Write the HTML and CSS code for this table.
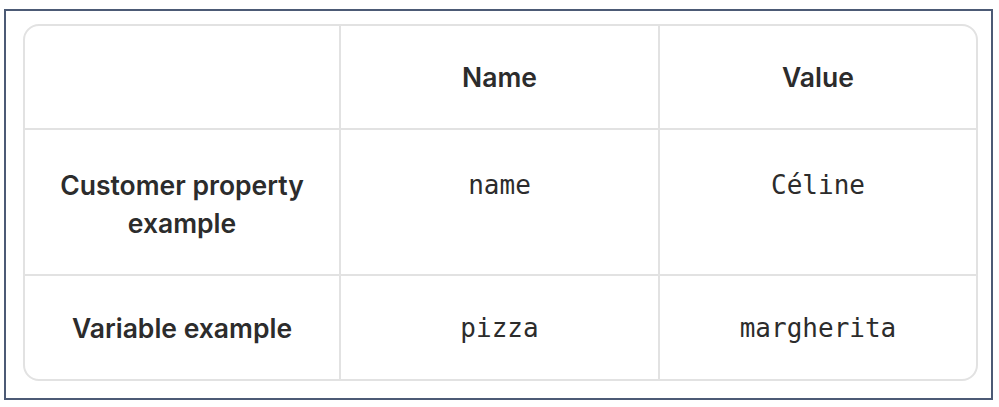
FILE: index.html
```html
<!DOCTYPE html>
<html>
<head>
<meta charset="utf-8">
<link rel="stylesheet" href="styles.css">
</head>
<body>
<div class="frame">
  <div class="card">
    <div class="cell head"></div>
    <div class="cell head">Name</div>
    <div class="cell head last">Value</div>

    <div class="cell label top">Customer property example</div>
    <div class="cell code top">name</div>
    <div class="cell code top last">Céline</div>

    <div class="cell label bottom">Variable example</div>
    <div class="cell code bottom">pizza</div>
    <div class="cell code bottom last">margherita</div>
  </div>
</div>
</body>
</html>
```
FILE: styles.css
```css
html, body {
  margin: 0;
  padding: 0;
  background: #ffffff;
}
.frame {
  box-sizing: border-box;
  margin: 9px 0 0 4px;
  width: 989px;
  height: 391px;
  border: 2px solid #4c5a75;
  padding: 13px 13px 0 17px;
}
.card {
  box-sizing: border-box;
  width: 955px;
  height: 357px;
  border: 2px solid #e2e2e2;
  border-radius: 16px;
  overflow: hidden;
  display: grid;
  grid-template-columns: 316px 319px 1fr;
  grid-template-rows: 104px 146px 1fr;
}
.cell {
  border-right: 2px solid #e2e2e2;
  border-bottom: 2px solid #e2e2e2;
  display: flex;
  justify-content: center;
  text-align: center;
  color: #2c2c2c;
  font-family: Inter, "Noto Sans", sans-serif;
  font-weight: 600;
  font-size: 26.5px;
  line-height: 38px;
}
.cell.last { border-right: none; }
.cell.bottom { border-bottom: none; }
.head { align-items: center; }
.top { align-items: flex-start; padding-top: 36px; }
.bottom { align-items: center; }
.label { padding-left: 10px; padding-right: 10px; }
.code {
  font-family: "DejaVu Sans Mono", "Liberation Mono", monospace;
  font-weight: 400;
  font-size: 26px;
  color: #2c2c2c;
}
```
